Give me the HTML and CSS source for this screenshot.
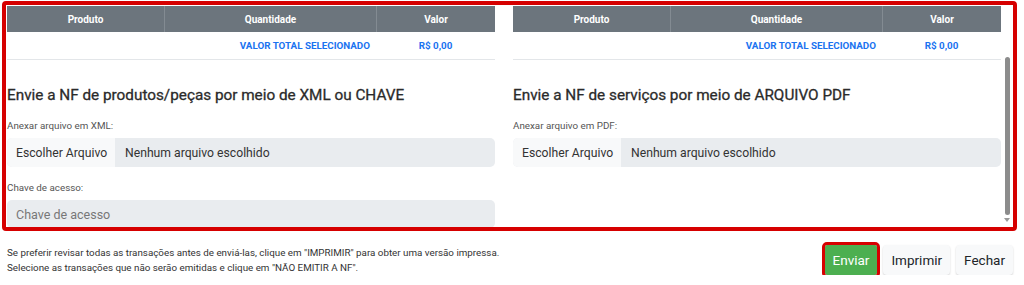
FILE: index.html
```html
<!DOCTYPE html>
<html lang="pt-BR">
<head>
<meta charset="utf-8">
<title>Envio de NF</title>
<link rel="stylesheet" href="styles.css">
</head>
<body>
<div class="frame">
  <div class="viewport">
    <div class="panel">
      <div class="tbl">
        <div class="thead">
          <div class="th">Produto</div>
          <div class="th sep">Quantidade</div>
          <div class="th sep">Valor</div>
        </div>
        <div class="trow">
          <div class="td"></div>
          <div class="td total-label">VALOR TOTAL SELECIONADO</div>
          <div class="td total-val">R$ 0,00</div>
        </div>
      </div>
      <h2 class="title">Envie a NF de produtos/peças por meio de XML ou CHAVE</h2>
      <div class="lbl">Anexar arquivo em XML:</div>
      <div class="file"><span class="file-btn">Escolher Arquivo</span><span class="file-name">Nenhum arquivo escolhido</span></div>
      <div class="lbl">Chave de acesso:</div>
      <input class="field" type="text" placeholder="Chave de acesso">
    </div>
    <div class="panel">
      <div class="tbl">
        <div class="thead">
          <div class="th">Produto</div>
          <div class="th sep">Quantidade</div>
          <div class="th sep">Valor</div>
        </div>
        <div class="trow">
          <div class="td"></div>
          <div class="td total-label">VALOR TOTAL SELECIONADO</div>
          <div class="td total-val">R$ 0,00</div>
        </div>
      </div>
      <h2 class="title">Envie a NF de serviços por meio de ARQUIVO PDF</h2>
      <div class="lbl">Anexar arquivo em PDF:</div>
      <div class="file"><span class="file-btn">Escolher Arquivo</span><span class="file-name">Nenhum arquivo escolhido</span></div>
    </div>
  </div>
  <div class="sbar">
    <div class="thumb"></div>
    <div class="arrow"></div>
  </div>
</div>
<div class="footer">
  <div class="note">
    <div>Se preferir revisar todas as transações antes de enviá-las, clique em "IMPRIMIR" para obter uma versão impressa.</div>
    <div>Selecione as transações que não serão emitidas e clique em "NÃO EMITIR A NF".</div>
  </div>
  <div class="actions">
    <button class="btn btn-send">Enviar</button>
    <button class="btn btn-light">Imprimir</button>
    <button class="btn btn-light">Fechar</button>
  </div>
</div>
</body>
</html>
```

FILE: styles.css
```css
html, body {
  margin: 0;
  padding: 0;
  background: #fff;
}
body {
  font-family: Roboto, "Liberation Sans", Arial, sans-serif;
  color: #333;
}
.frame {
  display: flex;
  margin: 1px 0 0 2px;
  width: 1015px;
  height: 230px;
  box-sizing: border-box;
  border: 4px solid #d60000;
  border-radius: 4px;
}
.viewport {
  flex: 1;
  display: grid;
  grid-template-columns: 488px 488px;
  column-gap: 18px;
  align-content: start;
  padding: 1px 0 0 1px;
  overflow: hidden;
}
.panel {
  display: flex;
  flex-direction: column;
}
.thead {
  display: grid;
  grid-template-columns: 157px 212px 1fr;
  height: 26px;
  background: #6c757d;
  color: #fff;
  font-size: 10px;
  font-weight: 700;
}
.th {
  display: flex;
  align-items: center;
  justify-content: center;
}
.th.sep {
  border-left: 1px solid #838b92;
}
.trow {
  display: grid;
  grid-template-columns: 157px 212px 1fr;
  height: 27px;
  border-bottom: 1px solid #e3e6e9;
  color: #1a73f0;
  font-size: 9.8px;
  font-weight: 700;
}
.td {
  display: flex;
  align-items: center;
}
.total-label {
  justify-content: flex-end;
  padding-right: 6px;
}
.total-val {
  justify-content: center;
}
.title {
  margin: 25px 0 0;
  font-size: 15.3px;
  line-height: 20px;
  font-weight: 400;
  color: #2b2b2b;
  -webkit-text-stroke: 0.3px #2b2b2b;
}
.lbl {
  margin: 15px 0 6px;
  font-size: 9.8px;
  line-height: 12px;
  color: #555;
}
.file {
  display: flex;
  height: 29px;
  background: #e9ecef;
  border-radius: 5px;
  overflow: hidden;
  font-size: 12.2px;
  color: #333;
}
.file-btn {
  display: flex;
  align-items: center;
  width: 108px;
  box-sizing: border-box;
  padding-left: 9px;
  background: #f8f9fa;
}
.file-name {
  display: flex;
  align-items: center;
  padding-left: 10px;
}
.field {
  display: block;
  height: 28px;
  box-sizing: border-box;
  margin: 0;
  padding: 0 9px;
  border: none;
  border-radius: 5px;
  background: #e9ecef;
  font-family: inherit;
  font-size: 12.5px;
  color: #333;
  outline: none;
}
.field::placeholder {
  color: #777;
}
.sbar {
  width: 10px;
  display: flex;
  flex-direction: column;
  padding-top: 52px;
  box-sizing: border-box;
}
.thumb {
  width: 5px;
  height: 158px;
  margin-left: 2px;
  background: #8c8c8c;
  border-radius: 3px;
}
.arrow {
  width: 0;
  height: 0;
  margin: 3px 0 0 1px;
  border-top: 4px solid #9a9a9a;
  border-left: 3.5px solid transparent;
  border-right: 3.5px solid transparent;
}
.footer {
  display: flex;
  justify-content: space-between;
  align-items: center;
  padding: 14px 11px 0 7px;
}
.note {
  font-size: 9.8px;
  line-height: 15px;
  color: #333;
}
.actions {
  display: flex;
  gap: 6px;
}
.btn {
  height: 30px;
  padding: 0 8px;
  border: none;
  border-radius: 4px;
  font-family: inherit;
  font-size: 13.5px;
  cursor: pointer;
}
.btn-send {
  background: #4caf50;
  color: #fff;
  outline: 3px solid #d60000;
  border-radius: 2px;
}
.btn-light {
  background: #f8f9fa;
  color: #212529;
  box-shadow: 0 1px 2px rgba(0, 0, 0, 0.18);
}
```
